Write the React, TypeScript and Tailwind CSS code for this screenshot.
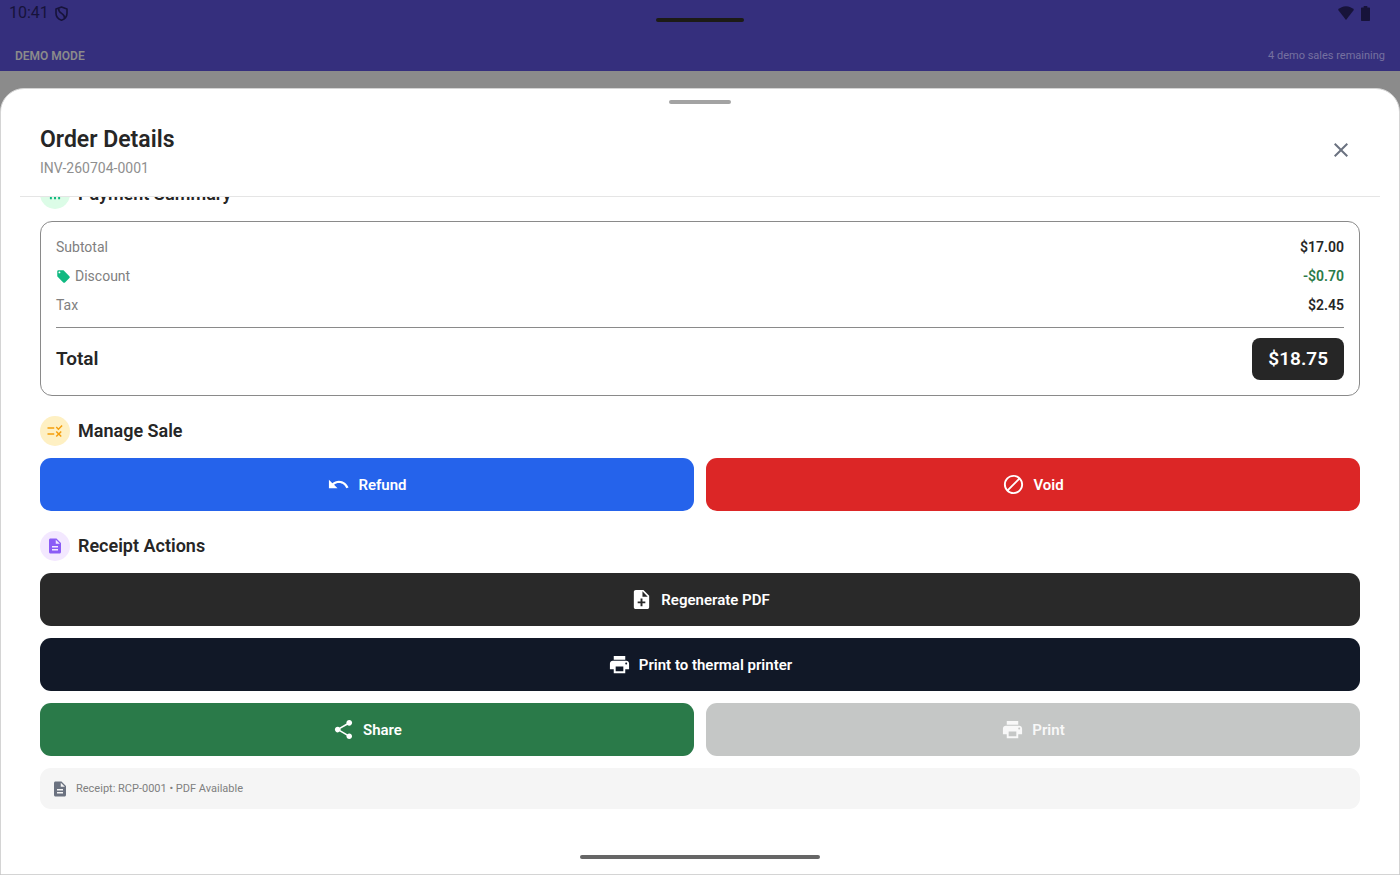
import type { ComponentType, ReactNode } from "react";
import {
  MdBlock,
  MdClose,
  MdDescription,
  MdLocalOffer,
  MdNoteAdd,
  MdPrint,
  MdRule,
  MdShare,
  MdUndo,
} from "react-icons/md";

type Icon = ComponentType<{ className?: string }>;

function BarsIcon({ className }: { className?: string }) {
  return (
    <svg viewBox="0 0 24 24" className={className} fill="currentColor">
      <path d="M5.200 10h2.600v9H5.200zM10.700 5h2.600v14h-2.600zM16.200 8h2.600v11h-2.600z" />
    </svg>
  );
}

function StatusBar() {
  return (
    <div className="flex h-[26px] items-center justify-between pr-[30px] pl-[9px] text-[#17133a]">
      <div className="flex items-center gap-[6px]">
        <span className="text-[16px] leading-5">10:41</span>
        <svg viewBox="0 0 13 15" className="h-[15px] w-[13px]" fill="none" stroke="currentColor" strokeWidth="1.600" strokeLinejoin="round">
          <path d="M6.500 1 12 3v4.200c0 3.200-2.200 5.800-5.500 7C3.200 13 1 10.400 1 7.200V3z" />
          <path d="M3.600 2.200c-.2 2.800 1 4 3 5.200s3.200 2.200 2.900 5" />
        </svg>
      </div>
      <div className="flex items-center gap-[7px]">
        <svg viewBox="0 0 16 14" className="h-[14px] w-4" fill="currentColor">
          <path d="M8 14 0 3.800C2 1.500 5 .3 8 .3s6 1.200 8 3.500z" />
        </svg>
        <svg viewBox="0 0 9 15" className="h-[15px] w-[9px]" fill="currentColor">
          <path d="M2.700 0h3.600v1.500H8c.6 0 1 .4 1 1V14c0 .6-.4 1-1 1H1c-.6 0-1-.4-1-1V2.500c0-.6.4-1 1-1h1.700z" />
        </svg>
      </div>
    </div>
  );
}

function SectionTitle({ icon: Glyph, tone, children }: { icon: Icon; tone: string; children: ReactNode }) {
  return (
    <div className="mb-3 flex items-center gap-2">
      <span className={`flex size-[30px] items-center justify-center rounded-full ${tone}`}>
        <Glyph className="size-[18px]" />
      </span>
      <h2 className="text-[18px] leading-6 font-semibold text-[#262626]">{children}</h2>
    </div>
  );
}

function ActionButton({
  icon: Glyph,
  tone,
  disabled,
  children,
}: {
  icon: Icon;
  tone: string;
  disabled?: boolean;
  children: ReactNode;
}) {
  return (
    <button
      type="button"
      disabled={disabled}
      className={`flex h-[53px] w-full items-center justify-center gap-2 rounded-[11px] text-[15px] leading-5 font-semibold ${tone}`}
    >
      <Glyph className="size-[23px]" />
      {children}
    </button>
  );
}

function SummaryRow({ label, value, tone, icon }: { label: string; value: string; tone: string; icon?: ReactNode }) {
  return (
    <div className="flex h-5 items-center justify-between text-[14px] leading-5">
      <dt className="flex items-center gap-1 text-[#808080]">
        {icon}
        {label}
      </dt>
      <dd className={`font-semibold ${tone}`}>{value}</dd>
    </div>
  );
}

export default function App() {
  return (
    <div className="flex h-screen flex-col bg-[#8b8b8b] font-[Roboto,sans-serif]">
      <header className="relative h-[71px] shrink-0 bg-[#352f7d]">
        <StatusBar />
        <div className="absolute top-[18px] left-1/2 h-1 w-[88px] -translate-x-1/2 rounded-full bg-[#1c1b16]" />
        <div className="flex items-center justify-between px-[15px] pt-5 leading-5">
          <span className="text-[12px] font-semibold text-[#8b8b8b]">DEMO MODE</span>
          <span className="text-[11px] text-[#7571a0]">4 demo sales remaining</span>
        </div>
      </header>

      <main className="relative mt-[17px] flex min-h-0 flex-1 flex-col overflow-hidden rounded-t-[24px] border border-[#d4d4d4] bg-white">
        <div className="mx-auto mt-[11px] h-1 w-[62px] shrink-0 rounded-full bg-[#a3a3a3]" />
        <div className="mx-[19px] flex h-[93px] shrink-0 items-center justify-between border-b border-[#e5e5e5] px-5">
          <div className="pt-[3px]">
            <h1 className="text-[23px] leading-8 font-semibold text-[#262626]">Order Details</h1>
            <p className="text-[14px] leading-6 text-[#8f8f8f]">INV-260704-0001</p>
          </div>
          <button type="button" aria-label="Close" className="flex size-[38px] items-center justify-center text-[#6b7280]">
            <MdClose className="size-6" />
          </button>
        </div>

        <div className="flex min-h-0 flex-1 flex-col justify-end overflow-hidden px-[39px] pb-[65px]">
          <section className="mb-5">
            <SectionTitle icon={BarsIcon} tone="bg-[#dcfce7] text-[#10b981]">
              Payment Summary
            </SectionTitle>
            <div className="rounded-[12px] border border-[#8a8a8a] p-[15px]">
              <dl className="flex flex-col gap-[9px]">
                <SummaryRow label="Subtotal" value="$17.00" tone="text-[#262626]" />
                <SummaryRow
                  label="Discount"
                  value="-$0.70"
                  tone="text-[#2a7a49]"
                  icon={<MdLocalOffer className="size-[15px] text-[#10b981]" />}
                />
                <SummaryRow label="Tax" value="$2.45" tone="text-[#262626]" />
              </dl>
              <div className="mt-3 flex items-center justify-between border-t border-[#8a8a8a] pt-[10px] text-[#262626]">
                <span className="text-[19px] leading-6 font-semibold">Total</span>
                <span className="flex h-[42px] items-center rounded-[8px] bg-[#262626] px-4 text-[19px] leading-6 font-semibold text-white">
                  $18.75
                </span>
              </div>
            </div>
          </section>

          <section className="mb-5">
            <SectionTitle icon={MdRule} tone="bg-[#fef0c3] text-[#f59e0b]">
              Manage Sale
            </SectionTitle>
            <div className="grid grid-cols-2 gap-3">
              <ActionButton icon={MdUndo} tone="bg-[#2563eb] text-white">
                Refund
              </ActionButton>
              <ActionButton icon={MdBlock} tone="bg-[#dc2626] text-white">
                Void
              </ActionButton>
            </div>
          </section>

          <section>
            <SectionTitle icon={MdDescription} tone="bg-[#f3e8ff] text-[#8b5cf6]">
              Receipt Actions
            </SectionTitle>
            <div className="flex flex-col gap-3">
              <ActionButton icon={MdNoteAdd} tone="bg-[#292929] text-white">
                Regenerate PDF
              </ActionButton>
              <ActionButton icon={MdPrint} tone="bg-[#111827] text-white">
                Print to thermal printer
              </ActionButton>
              <div className="grid grid-cols-2 gap-3">
                <ActionButton icon={MdShare} tone="bg-[#2a7a49] text-white">
                  Share
                </ActionButton>
                <ActionButton icon={MdPrint} tone="bg-[#c5c7c6] text-[#f8f8f8]" disabled>
                  Print
                </ActionButton>
              </div>
              <div className="flex h-[41px] items-center gap-[7px] rounded-[11px] bg-[#f5f5f5] px-[11px] text-[11px] leading-5 text-[#808080]">
                <MdDescription className="size-[18px] text-[#6b7280]" />
                Receipt: RCP-0001 • PDF Available
              </div>
            </div>
          </section>
        </div>
        <div className="absolute bottom-[15px] left-1/2 h-1 w-60 -translate-x-1/2 rounded-full bg-[#666666]" />
      </main>
    </div>
  );
}
